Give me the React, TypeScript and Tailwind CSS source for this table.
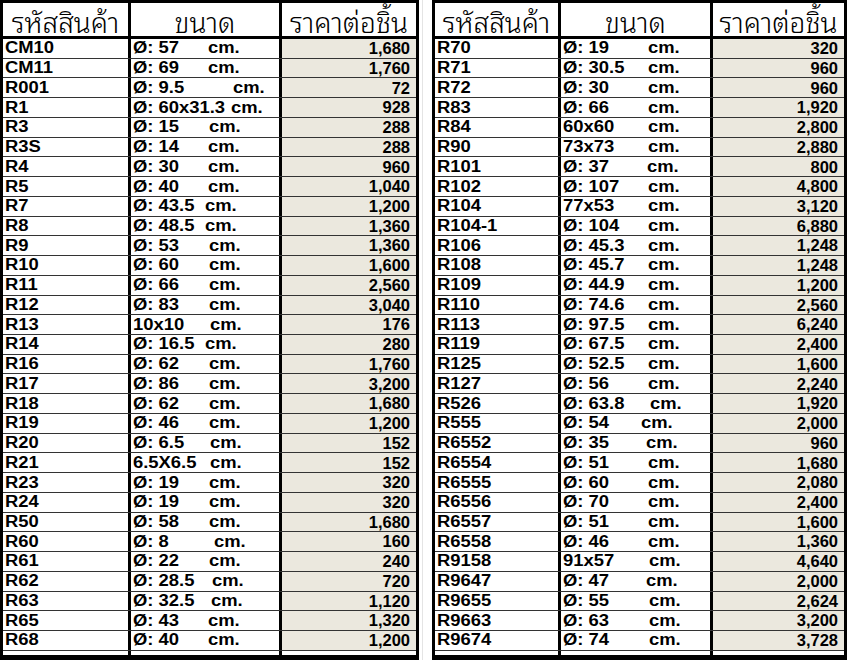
import React from "react";

type Row = [string, string, number, string];

const left: Row[] = [
  ["CM10", "Ø: 57", 77, "1,680"],
  ["CM11", "Ø: 69", 77, "1,760"],
  ["R001", "Ø: 9.5", 102, "72"],
  ["R1", "Ø: 60x31.3", 100, "928"],
  ["R3", "Ø: 15", 78, "288"],
  ["R3S", "Ø: 14", 77, "288"],
  ["R4", "Ø: 30", 77, "960"],
  ["R5", "Ø: 40", 77, "1,040"],
  ["R7", "Ø: 43.5", 74, "1,200"],
  ["R8", "Ø: 48.5", 74, "1,360"],
  ["R9", "Ø: 53", 78, "1,360"],
  ["R10", "Ø: 60", 78, "1,600"],
  ["R11", "Ø: 66", 78, "2,560"],
  ["R12", "Ø: 83", 78, "3,040"],
  ["R13", "10x10", 79, "176"],
  ["R14", "Ø: 16.5", 74, "280"],
  ["R16", "Ø: 62", 78, "1,760"],
  ["R17", "Ø: 86", 78, "3,200"],
  ["R18", "Ø: 62", 78, "1,680"],
  ["R19", "Ø: 46", 78, "1,200"],
  ["R20", "Ø: 6.5", 79, "152"],
  ["R21", "6.5X6.5", 79, "152"],
  ["R23", "Ø: 19", 78, "320"],
  ["R24", "Ø: 19", 78, "320"],
  ["R50", "Ø: 58", 78, "1,680"],
  ["R60", "Ø: 8", 83, "160"],
  ["R61", "Ø: 22", 78, "240"],
  ["R62", "Ø: 28.5", 81, "720"],
  ["R63", "Ø: 32.5", 80, "1,120"],
  ["R65", "Ø: 43", 77, "1,320"],
  ["R68", "Ø: 40", 77, "1,200"],
];

const right: Row[] = [
  ["R70", "Ø: 19", 87, "320"],
  ["R71", "Ø: 30.5", 87, "960"],
  ["R72", "Ø: 30", 87, "960"],
  ["R83", "Ø: 66", 87, "1,920"],
  ["R84", "60x60", 87, "2,800"],
  ["R90", "73x73", 87, "2,880"],
  ["R101", "Ø: 37", 86, "800"],
  ["R102", "Ø: 107", 87, "4,800"],
  ["R104", "77x53", 87, "3,120"],
  ["R104-1", "Ø: 104", 87, "6,880"],
  ["R106", "Ø: 45.3", 87, "1,248"],
  ["R108", "Ø: 45.7", 87, "1,248"],
  ["R109", "Ø: 44.9", 87, "1,200"],
  ["R110", "Ø: 74.6", 87, "2,560"],
  ["R113", "Ø: 97.5", 87, "6,240"],
  ["R119", "Ø: 67.5", 87, "2,400"],
  ["R125", "Ø: 52.5", 87, "1,600"],
  ["R127", "Ø: 56", 87, "2,240"],
  ["R526", "Ø: 63.8", 89, "1,920"],
  ["R555", "Ø: 54", 80, "2,000"],
  ["R6552", "Ø: 35", 85, "960"],
  ["R6554", "Ø: 51", 87, "1,680"],
  ["R6555", "Ø: 60", 87, "2,080"],
  ["R6556", "Ø: 70", 87, "2,400"],
  ["R6557", "Ø: 51", 87, "1,600"],
  ["R6558", "Ø: 46", 87, "1,360"],
  ["R9158", "91x57", 88, "4,640"],
  ["R9647", "Ø: 47", 85, "2,000"],
  ["R9655", "Ø: 55", 88, "2,624"],
  ["R9663", "Ø: 63", 88, "3,200"],
  ["R9674", "Ø: 74", 88, "3,728"],
];

const thai = { fontFamily: '"Noto Sans Thai Looped", "Noto Sans Thai", Tahoma, "Noto Sans", "DejaVu Sans", sans-serif' };
const SX = 1.15;

function Table({ rows, c1, c2, c3 }: { rows: Row[]; c1: string; c2: string; c3: string }) {
  const head = "flex items-end justify-center pb-[3px] text-[28px] leading-[0.9] font-light text-black";
  return (
    <div className="flex h-[660px] flex-col border-x-[3px] border-t-[3px] border-b-[5px] border-black bg-white">
      <div className="flex h-[36px] shrink-0 border-b-[3px] border-black">
        <div className={`${c1} ${head}`} style={thai}>
          รหัสสินค้า
        </div>
        <div className={`${c2} ${head} border-l-[3px] border-black`} style={thai}>
          ขนาด
        </div>
        <div className={`${c3} ${head} border-l-[3px] border-black`} style={thai}>
          ราคาต่อชิ้น
        </div>
      </div>
      <div className="flex flex-1 flex-col font-['Liberation_Sans',Arial,sans-serif] text-[16px] font-bold leading-none text-black">
        {rows.map((r) => (
          <div key={r[0]} className="flex h-[19.74px] shrink-0 border-b border-[#333]">
            <div className={`${c1} flex items-center pl-[2px]`}>
              <span className="inline-block origin-left scale-x-[1.15] whitespace-pre">{r[0]}</span>
            </div>
            <div className={`${c2} flex items-center border-l-[3px] border-black pl-[2px]`}>
              <div className="flex origin-left scale-x-[1.15] whitespace-pre">
                <span className="inline-block" style={{ width: (r[2] - 2) / SX }}>{r[1]}</span>
                <span>cm.</span>
              </div>
            </div>
            <div className={`${c3} flex items-center justify-end border-l-[3px] border-black bg-[#ebe8de] pr-[6px] text-[16.5px]`}>
              {r[3]}
            </div>
          </div>
        ))}
        <div className="flex flex-1">
          <div className={c1} />
          <div className={`${c2} border-l-[3px] border-black`} />
          <div className={`${c3} border-l-[3px] border-black`} />
        </div>
      </div>
    </div>
  );
}

export default function App() {
  return (
    <div className="flex h-[660px] w-[850px] overflow-hidden bg-white">
      <div className="w-[419px] shrink-0">
        <Table rows={left} c1="w-[125px] shrink-0" c2="w-[151px] shrink-0" c3="flex-1" />
      </div>
      <div className="flex w-[13px] shrink-0 justify-center pr-[6px]">
        <div className="h-full w-px bg-[#e4e4e4]" />
      </div>
      <div className="w-[415px] shrink-0">
        <Table rows={right} c1="w-[123px] shrink-0" c2="w-[152px] shrink-0" c3="flex-1" />
      </div>
    </div>
  );
}
